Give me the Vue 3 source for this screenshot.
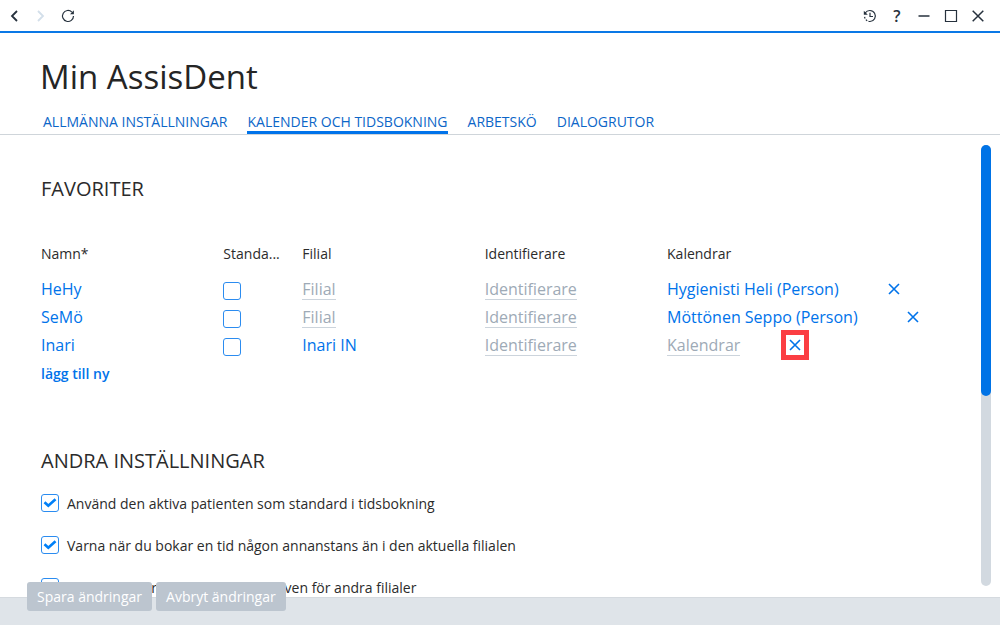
<script setup>
import { ref } from 'vue'

const tabs = ['ALLMÄNNA INSTÄLLNINGAR', 'KALENDER OCH TIDSBOKNING', 'ARBETSKÖ', 'DIALOGRUTOR']
const activeTab = ref(1)

const favorites = ref([
  { name: 'HeHy', standard: false, branch: '', identifier: '', calendars: 'Hygienisti Heli (Person)', marked: false },
  { name: 'SeMö', standard: false, branch: '', identifier: '', calendars: 'Möttönen Seppo (Person)', marked: false },
  { name: 'Inari', standard: false, branch: 'Inari IN', identifier: '', calendars: '', marked: true }
])

const settings = ref([
  { id: 'active-patient', label: 'Använd den aktiva patienten som standard i tidsbokning', on: true },
  { id: 'warn-branch', label: 'Varna när du bokar en tid någon annanstans än i den aktuella filialen', on: true },
  { id: 'other-branches', label: 'Visa patienter vid tidsbokningar även för andra filialer', on: true }
])
</script>

<template>
  <div class="app">
    <header class="topbar">
      <nav class="history" aria-label="Historik">
        <button type="button" aria-label="Bakåt">
          <svg viewBox="0 0 14 14"><path d="M10 2 5 7l5 5" class="bold" /></svg>
        </button>
        <button type="button" class="dim" aria-label="Framåt">
          <svg viewBox="0 0 14 14"><path d="M4 2l5 5-5 5" class="bold" /></svg>
        </button>
        <button type="button" aria-label="Uppdatera">
          <svg viewBox="0 0 14 14"><path d="M12.5 7A5.5 5.5 0 1 1 10.9 3.1" /><path d="M12.9 1.3v3.9H9z" class="solid" /></svg>
        </button>
      </nav>
      <div class="window-tools">
        <button type="button" aria-label="Senaste">
          <svg viewBox="0 0 14 14"><path d="M2.2 4A5.5 5.5 0 1 1 7 12.5" /><path d="M7 12.5A5.5 5.5 0 0 1 1.5 7" stroke-dasharray="1.6 1.3" /><path d="M.8 1.8v4h4z" class="solid" /><path d="M7 3.8v3.7h3" /></svg>
        </button>
        <button type="button" class="help" aria-label="Hjälp">?</button>
        <button type="button" aria-label="Minimera">
          <svg viewBox="0 0 14 14"><path d="M1.5 7h11" class="mid" /></svg>
        </button>
        <button type="button" aria-label="Maximera">
          <svg viewBox="0 0 14 14"><path d="M1.5 1.5h11v11h-11z" /></svg>
        </button>
        <button type="button" aria-label="Stäng">
          <svg viewBox="0 0 14 14"><path d="M1.7 1.7l10.6 10.6M12.3 1.7 1.7 12.3" class="mid" /></svg>
        </button>
      </div>
    </header>

    <h1>Min AssisDent</h1>
    <nav class="tabs" aria-label="Inställningar">
      <a v-for="(tab, i) in tabs" :key="tab" href="#" :class="{ active: i === activeTab }" @click.prevent="activeTab = i">{{ tab }}</a>
    </nav>

    <main class="body">
      <div class="content">
        <section>
          <h2>FAVORITER</h2>
          <table>
            <colgroup>
              <col class="wide" /><col class="narrow" /><col class="wide" /><col class="wide" /><col />
            </colgroup>
            <thead>
              <tr>
                <th>Namn*</th><th>Standa...</th><th>Filial</th><th>Identifierare</th><th>Kalendrar</th>
              </tr>
            </thead>
            <tbody>
              <tr v-for="row in favorites" :key="row.name">
                <td><button type="button" class="value">{{ row.name }}</button></td>
                <td><input v-model="row.standard" type="checkbox" class="check" :aria-label="'Standard ' + row.name" /></td>
                <td><button type="button" class="value" :class="{ empty: !row.branch }">{{ row.branch || 'Filial' }}</button></td>
                <td><button type="button" class="value" :class="{ empty: !row.identifier }">{{ row.identifier || 'Identifierare' }}</button></td>
                <td>
                  <div class="calendar">
                    <button type="button" class="value" :class="{ empty: !row.calendars }">{{ row.calendars || 'Kalendrar' }}</button>
                    <button type="button" class="remove" :class="{ marked: row.marked }" :aria-label="'Ta bort ' + row.name">
                      <svg viewBox="0 0 12 12"><path d="M1 1l10 10M11 1 1 11" /></svg>
                    </button>
                  </div>
                </td>
              </tr>
            </tbody>
          </table>
          <button type="button" class="add">lägg till ny</button>
        </section>

        <section class="other">
          <h2>ANDRA INSTÄLLNINGAR</h2>
          <div v-for="s in settings" :key="s.id" class="setting">
            <input :id="s.id" v-model="s.on" type="checkbox" class="check" />
            <label :for="s.id">{{ s.label }}</label>
          </div>
        </section>
      </div>
      <div class="track"><div class="thumb"></div></div>
    </main>

    <footer>
      <button type="button">Spara ändringar</button>
      <button type="button">Avbryt ändringar</button>
    </footer>
  </div>
</template>

<style>
body {
  margin: 0;
  background: #fff;
}
</style>

<style scoped>
.app {
  display: flex;
  flex-direction: column;
  height: 100vh;
  overflow: hidden;
  color: #2b2b2b;
  font-family: "Open Sans", "Noto Sans", sans-serif;
  font-size: 14px;
}
button {
  padding: 0;
  border: 0;
  background: none;
  color: inherit;
  font: inherit;
  cursor: pointer;
}
.topbar {
  flex: none;
  display: flex;
  justify-content: space-between;
  align-items: center;
  height: 31px;
  padding: 0 15px 0 7px;
  border-bottom: 2px solid #0a78e6;
  color: #26313d;
}
.history,
.window-tools {
  display: flex;
  gap: 13px;
}
.topbar button {
  display: flex;
  align-items: center;
  justify-content: center;
  width: 14px;
  height: 20px;
}
.topbar svg {
  flex: none;
  width: 14px;
  height: 14px;
  fill: none;
  stroke: currentColor;
  stroke-width: 1.2;
}
.topbar .bold {
  stroke-width: 1.8;
}
.topbar .mid {
  stroke-width: 1.5;
}
.topbar .solid {
  fill: currentColor;
  stroke: none;
}
.topbar .dim {
  color: #d3dfea;
}
.topbar .help {
  font-size: 16px;
  font-weight: 600;
}
h1 {
  flex: none;
  margin: 20px 0 0 40px;
  font-size: 33px;
  line-height: 48px;
  font-weight: 400;
  color: #252525;
}
.tabs {
  flex: none;
  display: flex;
  gap: 20px;
  margin-top: 11px;
  padding-left: 43px;
  border-bottom: 1px solid #cfd5da;
}
.tabs a {
  border-bottom: 3px solid transparent;
  color: #0c66c8;
  line-height: 19px;
  text-decoration: none;
}
.tabs a.active {
  border-bottom-color: #0073ea;
}
.body {
  position: relative;
  flex: 1;
  min-height: 0;
}
.content {
  height: 100%;
  padding: 0 19px 0 41px;
  box-sizing: border-box;
  overflow: hidden;
}
h2 {
  margin: 0;
  padding-top: 38px;
  font-size: 20px;
  line-height: 32px;
  font-weight: 400;
}
table {
  width: 100%;
  margin-top: 35px;
  border-collapse: collapse;
  table-layout: fixed;
}
.wide {
  width: 19.4%;
}
.narrow {
  width: 8.4%;
}
th {
  height: 27px;
  padding: 0 0 8px;
  font-weight: 400;
  text-align: left;
}
td {
  height: 28px;
  padding: 0;
  vertical-align: middle;
}
.value {
  display: block;
  border-bottom: 1px solid transparent;
  color: #0073ea;
  font-size: 16px;
  line-height: 20px;
  white-space: nowrap;
}
.value.empty {
  border-bottom-color: #ccd4dc;
  color: #9eaab6;
}
.calendar {
  display: flex;
  align-items: center;
  gap: 46px;
}
.remove {
  display: flex;
  align-items: center;
  justify-content: center;
  width: 18px;
  height: 20px;
}
.remove svg {
  width: 12px;
  height: 12px;
  stroke: #0073ea;
  stroke-width: 1.6;
}
.remove.marked {
  outline: 5px solid #fb3e43;
}
.check {
  appearance: none;
  display: block;
  flex: none;
  width: 18px;
  height: 18px;
  margin: 0;
  border: 1px solid #2b8cf0;
  border-radius: 3px;
  background: #fff;
}
td .check {
  margin-top: 3px;
}
.check:checked {
  background: #fff url("data:image/svg+xml,%3Csvg xmlns='http://www.w3.org/2000/svg' viewBox='0 0 16 16'%3E%3Cpath d='M2.5 7.2l3.8 3.6 7.2-6.6' fill='none' stroke='%230080f8' stroke-width='2.6'/%3E%3C/svg%3E") center / 16px 16px no-repeat;
}
.add {
  display: block;
  color: #0073ea;
  font-weight: 600;
  line-height: 30px;
}
.other {
  margin-top: 18px;
}
.setting {
  display: flex;
  align-items: center;
  gap: 8px;
  height: 42px;
}
.other h2 {
  padding-bottom: 5px;
}
.track {
  position: absolute;
  top: 10px;
  right: 9px;
  bottom: 11px;
  width: 10px;
  border-radius: 5px;
  background: #d2d9e0;
}
.thumb {
  height: 57%;
  border-radius: 5px;
  background: #0073e6;
}
footer {
  position: relative;
  flex: none;
  display: flex;
  align-items: flex-start;
  gap: 4px;
  height: 27px;
  padding-left: 27px;
  border-top: 1px solid #d5dadf;
  background: #dfe4e9;
}
footer button {
  margin-top: -16px;
  padding: 0 10px;
  border-radius: 3px;
  background: #bcc5cf;
  color: #fff;
  line-height: 29px;
}
</style>
